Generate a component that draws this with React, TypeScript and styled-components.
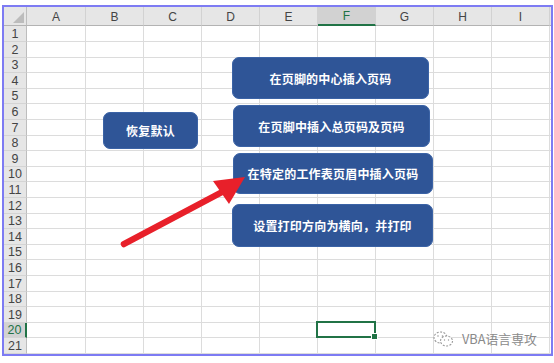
import React from 'react';
import styled, { createGlobalStyle, css } from 'styled-components';

const GlobalStyle = createGlobalStyle`
  html, body {
    margin: 0;
    padding: 0;
    background: #ffffff;
  }
  body {
    font-family: "Liberation Sans", "Noto Sans CJK SC", sans-serif;
  }
`;

const COLUMNS = ['A', 'B', 'C', 'D', 'E', 'F', 'G', 'H', 'I', ''];
const COL_WIDTHS = [59, 58, 58, 58, 58, 58, 58, 58, 58, 58];
const ROW_PATTERN = [16, 16, 15, 16, 15];
const ROW_HEIGHTS = Array.from({ length: 21 }, (_, i) => ROW_PATTERN[i % 5]);
const ACTIVE_COL = 'F';
const ACTIVE_ROW = 20;

// page coordinates of the floating shapes
const SHAPES = [
  { label: '恢复默认', x: 103, y: 112, w: 95, h: 37 },
  { label: '在页脚的中心插入页码', x: 232, y: 57, w: 197, h: 42 },
  { label: '在页脚中插入总页码及页码', x: 233, y: 105, w: 197, h: 42 },
  { label: '在特定的工作表页眉中插入页码', x: 233, y: 153, w: 200, h: 41 },
  { label: '设置打印方向为横向，并打印', x: 232, y: 204, w: 201, h: 43 },
];

const Page = styled.div`
  position: relative;
  width: 554px;
  height: 363px;
  box-sizing: border-box;
  padding: 5px 0 0 2px;
  background: #ffffff;
  overflow: hidden;
`;

const Frame = styled.div`
  width: 551px;
  height: 351px;
  box-sizing: border-box;
  border: 2px solid #7d7bf3;
  overflow: hidden;
  background: #ffffff;
`;

const Sheet = styled.div`
  display: grid;
  grid-template-columns: 23px ${COL_WIDTHS.map((w) => `${w}px`).join(' ')};
  grid-template-rows: 19px ${ROW_HEIGHTS.map((h) => `${h}px`).join(' ')};
`;

const Corner = styled.div`
  position: relative;
  background: #e6e6e6;
  border-right: 1px solid #bdbdbd;
  border-bottom: 1px solid #b3b3b3;

  &::after {
    content: '';
    position: absolute;
    right: 2px;
    bottom: 2px;
    width: 0;
    height: 0;
    border-style: solid;
    border-width: 0 0 11px 11px;
    border-color: transparent transparent #bcbcbc transparent;
  }
`;

const ColHeader = styled.div<{ $active?: boolean }>`
  display: flex;
  align-items: center;
  justify-content: center;
  box-sizing: border-box;
  background: #e6e6e6;
  border-right: 1px solid #d2d2d2;
  border-bottom: 1px solid #b3b3b3;
  font-size: 12px;
  color: #444444;
  padding-top: 1px;

  ${(p) =>
    p.$active &&
    css`
      background: #d2d2d2;
      color: #217346;
      border-bottom: 2px solid #217346;
    `}
`;

const RowHeader = styled.div<{ $active?: boolean }>`
  display: flex;
  align-items: center;
  justify-content: center;
  box-sizing: border-box;
  background: #e6e6e6;
  border-right: 1px solid #bdbdbd;
  border-bottom: 1px solid #d4d4d4;
  font-size: 12.5px;
  color: #444444;

  ${(p) =>
    p.$active &&
    css`
      background: #d2d2d2;
      color: #217346;
      border-right: 2px solid #217346;
    `}
`;

const Cell = styled.div<{ $selected?: boolean }>`
  position: relative;
  box-sizing: border-box;
  border-right: 1px solid #dcdcdc;
  border-bottom: 1px solid #dcdcdc;

  ${(p) =>
    p.$selected &&
    css`
      &::before {
        content: '';
        position: absolute;
        left: -2px;
        top: -2px;
        right: -1px;
        bottom: -1px;
        border: 2px solid #217346;
        z-index: 1;
      }
      &::after {
        content: '';
        position: absolute;
        right: -3px;
        bottom: -3px;
        width: 5px;
        height: 5px;
        background: #217346;
        border: 1px solid #ffffff;
        z-index: 2;
      }
    `}
`;

const ShapeButton = styled.div`
  position: absolute;
  box-sizing: border-box;
  display: flex;
  align-items: center;
  justify-content: center;
  background: #2f5597;
  border: 1px solid #3b63a6;
  border-radius: 7px;
  color: #ffffff;
  font-family: "Noto Sans CJK SC", "Liberation Sans", sans-serif;
  font-size: 12px;
  font-weight: 700;
  letter-spacing: 0.2px;
  white-space: nowrap;
  z-index: 3;
`;

const ArrowLayer = styled.svg`
  position: absolute;
  left: 0;
  top: 0;
  z-index: 4;
  pointer-events: none;
`;

const Watermark = styled.div`
  position: absolute;
  left: 432px;
  top: 329px;
  display: flex;
  align-items: center;
  gap: 7px;
  color: #8a8a8a;
  font-family: "Noto Sans CJK SC", "Liberation Sans", sans-serif;
  font-size: 12.8px;
  text-shadow: 0 0 2px #ffffff, 0 0 2px #ffffff;
  z-index: 5;
`;

const WechatIcon = () => (
  <svg width="23" height="18" viewBox="0 0 23 18" fill="none">
    <ellipse cx="8.5" cy="7.5" rx="6.5" ry="5.5" stroke="#9a9a9a" strokeWidth="1.1" strokeDasharray="2 1.4" fill="#ffffff" />
    <ellipse cx="14.5" cy="11" rx="6" ry="5" stroke="#9a9a9a" strokeWidth="1.1" strokeDasharray="2 1.4" fill="#ffffff" />
    <circle cx="6" cy="6" r="0.8" fill="#9a9a9a" />
    <circle cx="10.5" cy="6" r="0.8" fill="#9a9a9a" />
    <circle cx="12.5" cy="10" r="0.7" fill="#9a9a9a" />
    <circle cx="16.5" cy="10" r="0.7" fill="#9a9a9a" />
  </svg>
);

const App: React.FC = () => (
  <Page>
    <GlobalStyle />
    <Frame>
      <Sheet>
        <Corner />
        {COLUMNS.map((c, i) => (
          <ColHeader key={`h${i}`} $active={c === ACTIVE_COL}>
            {c}
          </ColHeader>
        ))}
        {ROW_HEIGHTS.map((_, r) => (
          <React.Fragment key={`r${r}`}>
            <RowHeader $active={r + 1 === ACTIVE_ROW}>{r + 1}</RowHeader>
            {COLUMNS.map((c, i) => (
              <Cell key={`c${r}-${i}`} $selected={c === ACTIVE_COL && r + 1 === ACTIVE_ROW} />
            ))}
          </React.Fragment>
        ))}
      </Sheet>
    </Frame>

    {SHAPES.map((s) => (
      <ShapeButton key={s.label} style={{ left: s.x, top: s.y, width: s.w, height: s.h }}>
        {s.label}
      </ShapeButton>
    ))}

    <ArrowLayer width="554" height="363" viewBox="0 0 554 363">
      <line x1="124" y1="244" x2="224" y2="191" stroke="#e8202a" strokeWidth="6.5" strokeLinecap="round" />
      <polygon points="245,177 213,181 229,204" fill="#e8202a" />
    </ArrowLayer>

    <Watermark>
      <WechatIcon />
      <span>VBA语言専攻</span>
    </Watermark>
  </Page>
);

export default App;
